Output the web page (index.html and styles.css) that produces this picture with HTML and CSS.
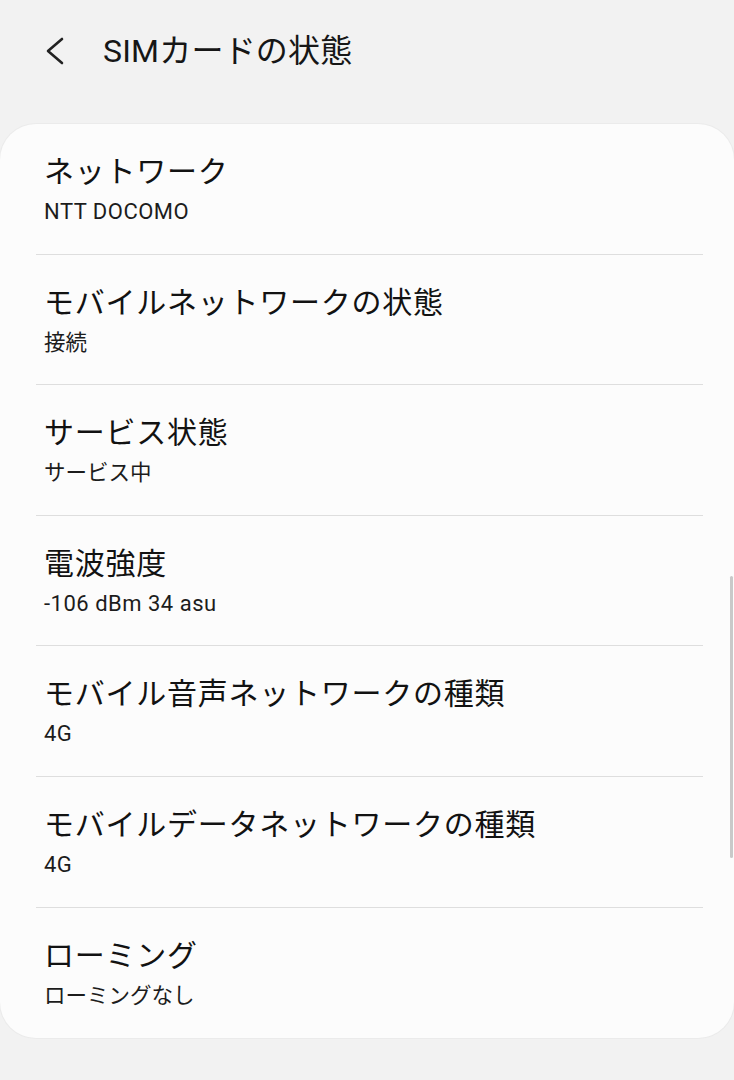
FILE: index.html
```html
<!DOCTYPE html>
<html lang="ja">
<head>
<meta charset="utf-8">
<link rel="stylesheet" href="styles.css">
</head>
<body>
<header class="appbar">
  <svg class="back" width="24" height="30" viewBox="0 0 24 30">
    <polyline points="18,3 4,15 18,27" fill="none" stroke="#222" stroke-width="2.6" stroke-linecap="round" stroke-linejoin="round"/>
  </svg>
  <h1 class="title">SIMカードの状態</h1>
</header>
<main class="card">
  <div class="item"><div class="item-title">ネットワーク</div><div class="item-sub latin">NTT DOCOMO</div></div>
  <div class="item"><div class="item-title">モバイルネットワークの状態</div><div class="item-sub">接続</div></div>
  <div class="item"><div class="item-title">サービス状態</div><div class="item-sub">サービス中</div></div>
  <div class="item"><div class="item-title">電波強度</div><div class="item-sub latin">-106 dBm 34 asu</div></div>
  <div class="item"><div class="item-title">モバイル音声ネットワークの種類</div><div class="item-sub latin">4G</div></div>
  <div class="item"><div class="item-title">モバイルデータネットワークの種類</div><div class="item-sub latin">4G</div></div>
  <div class="item last"><div class="item-title">ローミング</div><div class="item-sub">ローミングなし</div></div>
  <div class="scrollbar"></div>
</main>
</body>
</html>
```
FILE: styles.css
```css
html, body {
  margin: 0;
  padding: 0;
}
body {
  width: 734px;
  height: 1080px;
  background: #f2f2f2;
  font-family: "Roboto", "Noto Sans CJK JP", sans-serif;
  color: #141414;
  overflow: hidden;
}
.appbar {
  height: 124px;
  display: flex;
  align-items: flex-start;
  box-sizing: border-box;
  padding: 32px 0 0 44px;
}
.back {
  display: block;
  margin-top: 4px;
}
.title {
  margin: 0 0 0 35px;
  font-size: 32px;
  font-weight: 400;
  line-height: 38px;
  letter-spacing: 0.2px;
  color: #161616;
}
.card {
  position: relative;
  background: #fcfcfc;
  border-radius: 36px;
  margin: 0;
  width: 734px;
  box-shadow: 0 0 0 1px #ebebeb;
}
.item {
  padding: 30px 0 28.6px 44px;
  position: relative;
}
.item::after {
  content: "";
  position: absolute;
  left: 36px;
  right: 31px;
  bottom: 0;
  height: 1px;
  background: #dedede;
}
.item.last::after {
  display: none;
}
.item-title {
  font-size: 30px;
  line-height: 36px;
  letter-spacing: 0.75px;
  color: #121212;
}
.item-sub {
  margin-top: 8px;
  font-size: 21.5px;
  line-height: 28px;
  color: #1c1c1c;
}
.item-sub.latin {
  font-size: 22px;
  letter-spacing: 0.5px;
}
.scrollbar {
  position: absolute;
  right: 1px;
  top: 452px;
  width: 3px;
  height: 282px;
  border-radius: 2px;
  background: #c9c9c9;
}
```
